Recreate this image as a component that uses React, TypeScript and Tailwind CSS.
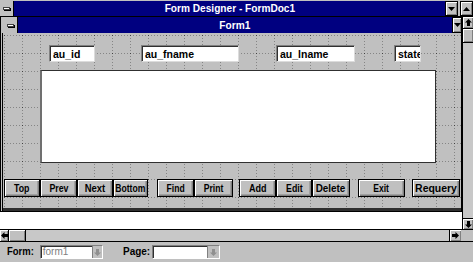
import React from "react";

const FONT = "font-['Liberation_Sans',Arial,sans-serif]";

// grid dots of the form designer (18px pitch)
const GRID =
  "[background-image:conic-gradient(from_270deg_at_1px_1px,#404040_90deg,transparent_0),conic-gradient(from_270deg_at_1px_1px,#858585_90deg,transparent_0),conic-gradient(from_270deg_at_1px_1px,#858585_90deg,transparent_0)] [background-size:18px_18px,3px_18px,18px_3px] [background-position:1px_2px,1px_2px,1px_2px]";

function Tri({ dir, className = "" }: { dir: "up" | "down"; className?: string }) {
  return (
    <svg width="7" height="4" viewBox="0 0 7 4" className={className}>
      {dir === "down" ? <path d="M0 0h7L3.5 4z" fill="#000" /> : <path d="M0 4h7L3.5 0z" fill="#000" />}
    </svg>
  );
}

function ScrollArrow({ dir, color = "#000" }: { dir: "up" | "down" | "left" | "right"; color?: string }) {
  const rot = { up: 0, right: 90, down: 180, left: 270 }[dir];
  return (
    <svg width="7" height="7" viewBox="0 0 7 7" style={{ transform: `rotate(${rot}deg)` }}>
      <path d="M3.5 0L7 3.5H5V7H2V3.5H0z" fill={color} />
    </svg>
  );
}

function SysBox({ className = "" }: { className?: string }) {
  return (
    <div className={`flex items-center justify-center bg-[#c0c0c0] border-r border-black ${className}`}>
      <div className="h-[3px] w-[7px] border border-[#404040] bg-white shadow-[1px_1px_0_#000]" />
    </div>
  );
}

function TextBox({ text, w, ml }: { text: string; w: string; ml: string }) {
  return (
    <div
      className={`${w} ${ml} h-[17px] shrink-0 overflow-hidden whitespace-nowrap bg-white border border-t-[#808080] border-l-[#808080] border-r-[#dcdcdc] border-b-[#dcdcdc] shadow-[inset_1px_1px_0_#303030] pl-[3px] pt-[1px] text-[10.5px] font-bold leading-[14px] text-black`}
    >
      {text}
    </div>
  );
}

const BUTTONS = [
  { label: "Top", w: "w-[36px]", ml: "ml-[1px]", sx: "scale-x-[0.8]" },
  { label: "Prev", w: "w-[37px]", ml: "", sx: "scale-x-[0.8]" },
  { label: "Next", w: "w-[36px]", ml: "", sx: "scale-x-[0.86]" },
  { label: "Bottom", w: "w-[35px]", ml: "", sx: "scale-x-[0.78]" },
  { label: "Find", w: "w-[37px]", ml: "ml-[9px]", sx: "scale-x-[0.78]" },
  { label: "Print", w: "w-[39px]", ml: "", sx: "scale-x-[0.78]" },
  { label: "Add", w: "w-[37px]", ml: "ml-[6px]", sx: "scale-x-[0.82]" },
  { label: "Edit", w: "w-[36px]", ml: "", sx: "scale-x-[0.8]" },
  { label: "Delete", w: "w-[38px]", ml: "", sx: "scale-x-[0.9]" },
  { label: "Exit", w: "w-[47px]", ml: "ml-[8px]", sx: "scale-x-[0.78]" },
  { label: "Requery", w: "w-[48px]", ml: "ml-[7px]", sx: "scale-x-[0.95]" },
];

export default function App() {
  return (
    <div className={`w-[473px] h-[262px] overflow-hidden bg-[#c0c0c0] flex flex-col ${FONT}`}>
      {/* Fenêtre principale */}
      <div className="h-[17px] flex border-b border-black">
        <SysBox className="w-[14px] mt-[1px]" />
        <div className="flex-1 mt-[1px] bg-[#000080] flex items-center justify-center text-white text-[11px] font-bold">
          <span className="scale-x-[0.92]">Form Designer - FormDoc1</span>
        </div>
        <div className="w-[13px] mt-[1px] flex items-center justify-center border border-black shadow-[inset_1px_1px_0_#fff,inset_-1px_-1px_0_#808080]">
          <Tri dir="down" />
        </div>
        <div className="w-[2px]" />
        <div className="w-[13px] mt-[1px] flex items-center justify-center border border-black shadow-[inset_1px_1px_0_#fff,inset_-1px_-1px_0_#808080]">
          <Tri dir="up" />
        </div>
      </div>

      <div className="flex h-[212px]">
        <div className="w-[462px] flex flex-col">
          {/* Form1 */}
          <div className="h-[16px] flex pl-[2px] border-l border-black">
            <SysBox className="w-[15px]" />
            <div className="flex-1 bg-[#000080] flex items-center justify-center text-white text-[11px] font-bold">
              <span className="scale-x-[0.92]">Form1</span>
            </div>
            <div className="w-[10px] flex items-center justify-center border border-black shadow-[inset_1px_1px_0_#fff,inset_-1px_-1px_0_#808080]">
              <Tri dir="down" />
            </div>
          </div>
          <div className="h-[178px] flex border-l-[3px] border-double border-black border-r border-r-black">
            <div className={`flex-1 flex flex-col border-b-[3px] border-b-[#303030] ${GRID}`}>
              <div className="flex mt-[12px]">
                <TextBox text="au_id" w="w-[46px]" ml="ml-[46px]" />
                <TextBox text="au_fname" w="w-[98px]" ml="ml-[46px]" />
                <TextBox text="au_lname" w="w-[79px]" ml="ml-[37px]" />
                <TextBox text="state" w="w-[27px]" ml="ml-[39px]" />
              </div>
              <div className="ml-[37px] mt-[8px] w-[396px] h-[93px] bg-white border border-[#303030] border-l-2 border-l-[#707070]" />
              <div className="flex mt-[16px]">
                {BUTTONS.map((b) => (
                  <div
                    key={b.label}
                    className={`${b.w} ${b.ml} h-[18px] shrink-0 flex items-center justify-center bg-[#c0c0c0] border border-black shadow-[inset_1px_1px_0_#fff,inset_-1px_-1px_0_#808080,inset_-2px_-2px_0_#a0a0a0] text-[11px] font-bold text-black whitespace-nowrap`}
                  >
                    <span className={`inline-block ${b.sx}`}>{b.label}</span>
                  </div>
                ))}
              </div>
            </div>
          </div>
          <div className="flex-1 bg-white border-t border-black" />
        </div>

        {/* barre verticale */}
        <div className="w-[11px] flex flex-col border-l border-black bg-[#c8c8c8]">
          <div className="h-[12px] flex items-center justify-center bg-[#c0c0c0] border-b border-black shadow-[inset_1px_1px_0_#fff,inset_-1px_-1px_0_#808080]">
            <ScrollArrow dir="up" />
          </div>
          <div className="h-[14px] bg-[#c0c0c0] border-b border-black shadow-[inset_1px_1px_0_#fff,inset_-1px_-1px_0_#808080]" />
          <div className="flex-1" />
          <div className="h-[11px] flex items-center justify-center bg-[#c0c0c0] border-t border-black shadow-[inset_1px_1px_0_#fff,inset_-1px_-1px_0_#808080]">
            <ScrollArrow dir="down" />
          </div>
        </div>
      </div>

      {/* barre horizontale */}
      <div className="h-[13px] flex border-t border-b border-black">
        <div className="w-[461px] flex bg-[#c8c8c8]">
          <div className="w-[9px] flex items-center justify-center bg-[#c0c0c0] border-r border-black shadow-[inset_1px_1px_0_#fff,inset_-1px_-1px_0_#808080]">
            <ScrollArrow dir="left" />
          </div>
          <div className="w-[17px] bg-[#c0c0c0] border-r border-black shadow-[inset_1px_1px_0_#fff,inset_-1px_-1px_0_#808080]" />
          <div className="flex-1" />
          <div className="w-[12px] flex items-center justify-center bg-[#c0c0c0] border-l border-black shadow-[inset_1px_1px_0_#fff,inset_-1px_-1px_0_#808080]">
            <ScrollArrow dir="right" />
          </div>
        </div>
        <div className="flex-1 bg-[#c0c0c0]" />
      </div>

      {/* barre d'état */}
      <div className="flex-1 flex items-center text-[10.5px] font-bold text-black">
        <span className="ml-[7px] scale-x-[0.9] origin-left">Form:</span>
        <div className="ml-[3px] w-[63px] h-[14px] flex bg-white border border-t-[#808080] border-l-[#808080] border-r-white border-b-white shadow-[inset_1px_1px_0_#303030]">
          <span className="flex-1 pl-[2px] text-[10px] font-normal leading-[12px] text-[#808080]">form1</span>
          <div className="w-[10px] flex items-center justify-center bg-[#c0c0c0] border-l border-[#808080]">
            <ScrollArrow dir="down" color="#909090" />
          </div>
        </div>
        <span className="ml-[20px] scale-x-[0.95] origin-left">Page:</span>
        <div className="ml-[1px] w-[68px] h-[14px] flex bg-white border border-t-[#808080] border-l-[#808080] border-r-white border-b-white shadow-[inset_1px_1px_0_#303030]">
          <span className="flex-1" />
          <div className="w-[12px] flex items-center justify-center bg-[#c0c0c0] border-l border-[#808080]">
            <ScrollArrow dir="down" color="#909090" />
          </div>
        </div>
      </div>
    </div>
  );
}
